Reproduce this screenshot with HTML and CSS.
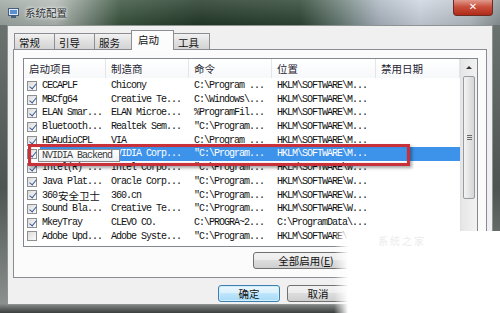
FILE: index.html
```html
<!DOCTYPE html>
<html>
<head>
  <meta charset="UTF-8">
  <title>系统配置</title>
  <link rel="stylesheet" href="styles.css">
</head>
<body>
  <div class="window">
    <div class="titlebar">
      <svg class="app-icon" width="11" height="10" viewBox="0 0 11 10">
        <rect x="0.5" y="0.5" width="10" height="7" fill="#dfe8f5" stroke="#44607e"/>
        <rect x="2" y="2" width="7" height="4" fill="#5a8fd0"/>
        <rect x="3" y="8" width="5" height="2" fill="#44607e"/>
      </svg>
      <span class="title">系统配置</span>
      <div class="close">✕</div>
    </div>

    <div class="client">
      <div class="tabs">
        <div class="tab" style="width:41px">常规</div>
        <div class="tab" style="width:41px">引导</div>
        <div class="tab" style="width:40px">服务</div>
        <div class="tab active" style="width:43px">启动</div>
        <div class="tab" style="width:37px">工具</div>
      </div>

      <div class="panel">
        <div class="listbox">
          <div class="list">
            <div class="header">
              <div class="hcell">启动项目</div>
              <div class="hcell">制造商</div>
              <div class="hcell">命令</div>
              <div class="hcell">位置</div>
              <div class="hcell">禁用日期</div>
            </div>
            <div class="rows">
              <div class="row"><div class="cell first"><span class="chk on"></span>CECAPLF</div><div class="cell">Chicony</div><div class="cell">C:\Program ...</div><div class="cell">HKLM\SOFTWARE\M...</div><div class="cell"></div></div>
              <div class="row"><div class="cell first"><span class="chk on"></span>MBCfg64</div><div class="cell">Creative Te...</div><div class="cell">C:\Windows\...</div><div class="cell">HKLM\SOFTWARE\M...</div><div class="cell"></div></div>
              <div class="row"><div class="cell first"><span class="chk on"></span>ELAN Smar...</div><div class="cell">ELAN Microe...</div><div class="cell">%ProgramFil...</div><div class="cell">HKLM\SOFTWARE\M...</div><div class="cell"></div></div>
              <div class="row"><div class="cell first"><span class="chk on"></span>Bluetooth...</div><div class="cell">Realtek Sem...</div><div class="cell">"C:\Program...</div><div class="cell">HKLM\SOFTWARE\M...</div><div class="cell"></div></div>
              <div class="row"><div class="cell first"><span class="chk on"></span>HDAudioCPL</div><div class="cell">VIA</div><div class="cell">C:\Program ...</div><div class="cell">HKLM\SOFTWARE\M...</div><div class="cell"></div></div>
              <div class="row selected"><div class="cell first"><span class="chk on"></span>NVIDIA</div><div class="cell">NVIDIA Corp...</div><div class="cell">"C:\Program...</div><div class="cell">HKLM\SOFTWARE\M...</div><div class="cell"></div></div>
              <div class="row"><div class="cell first"><span class="chk on"></span>Intel(R) ...</div><div class="cell">Intel Corpo...</div><div class="cell">"C:\Program...</div><div class="cell">HKLM\SOFTWARE\W...</div><div class="cell"></div></div>
              <div class="row"><div class="cell first"><span class="chk on"></span>Java Plat...</div><div class="cell">Oracle Corp...</div><div class="cell">"C:\Program...</div><div class="cell">HKLM\SOFTWARE\W...</div><div class="cell"></div></div>
              <div class="row"><div class="cell first"><span class="chk on"></span>360<span class="cjk">安全卫士</span></div><div class="cell">360.cn</div><div class="cell">"C:\Program...</div><div class="cell">HKLM\SOFTWARE\W...</div><div class="cell"></div></div>
              <div class="row"><div class="cell first"><span class="chk on"></span>Sound Bla...</div><div class="cell">Creative Te...</div><div class="cell">"C:\Program...</div><div class="cell">HKLM\SOFTWARE\W...</div><div class="cell"></div></div>
              <div class="row"><div class="cell first"><span class="chk on"></span>MkeyTray</div><div class="cell">CLEVO CO.</div><div class="cell">C:\PROGRA~2...</div><div class="cell">C:\ProgramData\...</div><div class="cell"></div></div>
              <div class="row"><div class="cell first"><span class="chk"></span>Adobe Upd...</div><div class="cell">Adobe Syste...</div><div class="cell">"C:\Program...</div><div class="cell">HKLM\SOFTWARE\W...</div><div class="cell"></div></div>
            </div>
          </div>
          <div class="scrollbar">
            <div class="arrow-up"></div>
            <div class="thumb"><span class="grip"></span></div>
          </div>

          <div class="tooltip">NVIDIA Backend</div>
          <div class="red-box"></div>
        </div>

        <div class="panel-buttons">
          <div class="btn wide">全部启用(<u>E</u>)</div>
          <div class="btn wide">全部禁用(<u>D</u>)</div>
        </div>
      </div>

      <div class="dialog-buttons">
        <div class="btn default">确定</div>
        <div class="btn">取消</div>
        <div class="btn">应用(<u>A</u>)</div>
        <div class="btn">帮助</div>
      </div>
    </div>

    <div class="mark"><span>系统之家</span></div>
  </div>
</body>
</html>
```

FILE: styles.css
```css
body {
  margin: 0;
  font-family: "Noto Sans CJK SC", "Noto Sans", sans-serif;
}
.window {
  position: relative;
  width: 500px;
  height: 313px;
  overflow: hidden;
  background: linear-gradient(to bottom, #6f7774, #4d5452 60%, #8b908e 97%, #3a3e3d);
  display: flex;
  flex-direction: column;
}
.titlebar {
  height: 25px;
  flex: none;
  display: flex;
  align-items: center;
  padding-left: 8px;
  background:
    linear-gradient(to bottom, rgba(255,255,255,0.15), rgba(0,0,0,0.1)),
    linear-gradient(to right, #9fa8a4 0, #b4bcb7 55px, #7c8c80 85px, #3b5540 120px, #243a29 200px, #2f4634 300px, #6b7f78 340px, #aeb8c4 380px, #cfd6e0 420px, #b9c0c7 470px, #8e9699 500px);
  position: relative;
}
.app-icon {
  margin-right: 6px;
}
.title {
  font-size: 10.5px;
  color: #2a2e30;
  text-shadow: 0 0 4px #fff, 0 0 2px #fff;
}
.close {
  position: absolute;
  right: 7px;
  top: 0;
  width: 38px;
  height: 15px;
  background: linear-gradient(to bottom, #e09a8c, #c9503d 45%, #b02a18);
  border: 1px solid #6b2a22;
  border-top: none;
  border-radius: 0 0 4px 4px;
  color: #fff;
  font-size: 10px;
  font-weight: bold;
  line-height: 14px;
  text-align: center;
  font-family: "DejaVu Sans", sans-serif;
}
.client {
  height: 280px;
  margin: 0 7px;
  background: #f0f0f0;
  border: 1px solid #8e9492;
  box-sizing: border-box;
  padding: 4px 5px 0 5px;
  display: flex;
  flex-direction: column;
}
.tabs {
  display: flex;
  align-items: flex-end;
  height: 19px;
  padding-left: 1px;
  position: relative;
  z-index: 1;
}
.tab {
  height: 16px;
  box-sizing: border-box;
  border: 1px solid #8c8e94;
  border-bottom: none;
  margin-right: -1px;
  background: linear-gradient(to bottom, #f2f2f2, #e0e0e0 50%, #d4d4d4);
  font-size: 10.5px;
  line-height: 17px;
  padding-left: 4px;
  color: #111;
}
.tab.active {
  height: 20px;
  margin: 0 -1px -1px -2px;
  background: #fcfcfc;
  padding-left: 6px;
  line-height: 18px;
  position: relative;
}
.panel {
  height: 229px;
  box-sizing: border-box;
  border: 1px solid #898c95;
  background: #fbfbfb;
  padding: 8px 8px 0 9px;
  display: flex;
  flex-direction: column;
}
.listbox {
  position: relative;
  height: 189px;
  box-sizing: border-box;
  border: 1px solid #828790;
  background: #fff;
  display: flex;
}
.list {
  width: 436px;
  flex: none;
}
.header {
  display: grid;
  grid-template-columns: 82px 83px 83px 104px 84px;
  height: 19px;
  background: linear-gradient(to bottom, #fff, #f7f8fa);
}
.hcell {
  font-size: 10.5px;
  line-height: 19px;
  padding-left: 5px;
  color: #1e2430;
  border-right: 1px solid #e3e5e8;
}
.rows {
  padding-top: 1px;
}
.row {
  display: grid;
  grid-template-columns: 82px 83px 83px 104px 84px;
  height: 13.7px;
  align-items: center;
  font-family: "Liberation Mono", "Noto Sans CJK SC", monospace;
  font-size: 10px;
  letter-spacing: -1px;
  color: #111;
}
.row.selected {
  background: linear-gradient(to right, transparent 16px, #3d92ea 16px);
  color: #fff;
}
.cell {
  padding-left: 5px;
  white-space: nowrap;
  overflow: hidden;
  line-height: 13.7px;
}
.cell.first {
  padding-left: 3px;
  display: flex;
  align-items: center;
  gap: 5px;
}
.cjk {
  font-family: "Noto Sans CJK SC", sans-serif;
  font-size: 10.5px;
  letter-spacing: 0;
  margin-left: -4px;
}
.chk {
  position: relative;
  flex: none;
  width: 10px;
  height: 10px;
  box-sizing: border-box;
  border: 1px solid #8e8f8f;
  background: linear-gradient(135deg, #dcdcdc, #fbfbfb);
}
.chk.on::after {
  content: "";
  position: absolute;
  left: 2.5px;
  top: 0;
  width: 3px;
  height: 6px;
  border-right: 1.6px solid #3c5a98;
  border-bottom: 1.6px solid #3c5a98;
  transform: rotate(40deg);
}
.scrollbar {
  flex: 1;
  background: linear-gradient(to right, #e6e6e6, #f2f2f2);
  border-left: 1px solid #e0e0e0;
  display: flex;
  flex-direction: column;
  align-items: center;
}
.arrow-up {
  height: 17px;
  width: 100%;
  display: flex;
  justify-content: center;
  align-items: center;
}
.arrow-up::before {
  content: "";
  border-left: 3px solid transparent;
  border-right: 3px solid transparent;
  border-bottom: 3px solid #333;
}
.thumb {
  width: 12px;
  height: 123px;
  box-sizing: border-box;
  border: 1px solid #979a9e;
  border-radius: 2px;
  background: linear-gradient(to right, #f4f4f4, #e4e4e4 50%, #d6d6d6);
  display: flex;
  justify-content: center;
  align-items: center;
}
.grip {
  width: 5px;
  height: 5px;
  background: repeating-linear-gradient(to bottom, #6a6a6a 0 1px, transparent 1px 2px);
}
.tooltip {
  position: absolute;
  left: 14px;
  top: 90px;
  width: 82px;
  height: 13px;
  box-sizing: border-box;
  border: 1px solid #8a8a8a;
  background: linear-gradient(to bottom, #fff, #eef0f3);
  font-family: "Liberation Mono", monospace;
  font-size: 10px;
  letter-spacing: -1px;
  line-height: 11px;
  padding-left: 3px;
  color: #3a3a3a;
  white-space: nowrap;
}
.red-box {
  position: absolute;
  left: 4px;
  top: 85px;
  width: 382px;
  height: 22px;
  box-sizing: border-box;
  border: 3px solid #c8303a;
  box-shadow: 2px 2px 3px rgba(0,0,0,0.35), inset 0 0 1px rgba(120,0,0,0.6);
}
.panel-buttons {
  display: flex;
  justify-content: flex-end;
  gap: 6px;
  padding-top: 5px;
  padding-right: 7px;
}
.btn {
  width: 62px;
  height: 17px;
  box-sizing: border-box;
  border: 1px solid #707070;
  border-radius: 3px;
  background: linear-gradient(to bottom, #f2f2f2, #ebebeb 50%, #dddddd 50%, #cfcfcf);
  font-size: 10.5px;
  line-height: 15px;
  text-align: center;
  color: #111;
}
.btn.wide {
  width: 106px;
}
.btn.default {
  border-color: #3c7fb1;
  background: linear-gradient(to bottom, #eaf6fd, #d9f0fc 50%, #bee6fd 50%, #a7d9f5);
  box-shadow: inset 0 0 0 1px #d0eefc;
}
.dialog-buttons {
  display: flex;
  justify-content: flex-end;
  gap: 7px;
  padding-top: 7px;
}
.mark {
  position: absolute;
  left: 334px;
  top: 231px;
  width: 166px;
  height: 82px;
  background: linear-gradient(to right, rgba(255,255,255,0), #fff 14px);
}
.mark span {
  position: absolute;
  left: 44px;
  top: 2px;
  font-size: 10px;
  color: #ececec;
  letter-spacing: 2px;
}
```
